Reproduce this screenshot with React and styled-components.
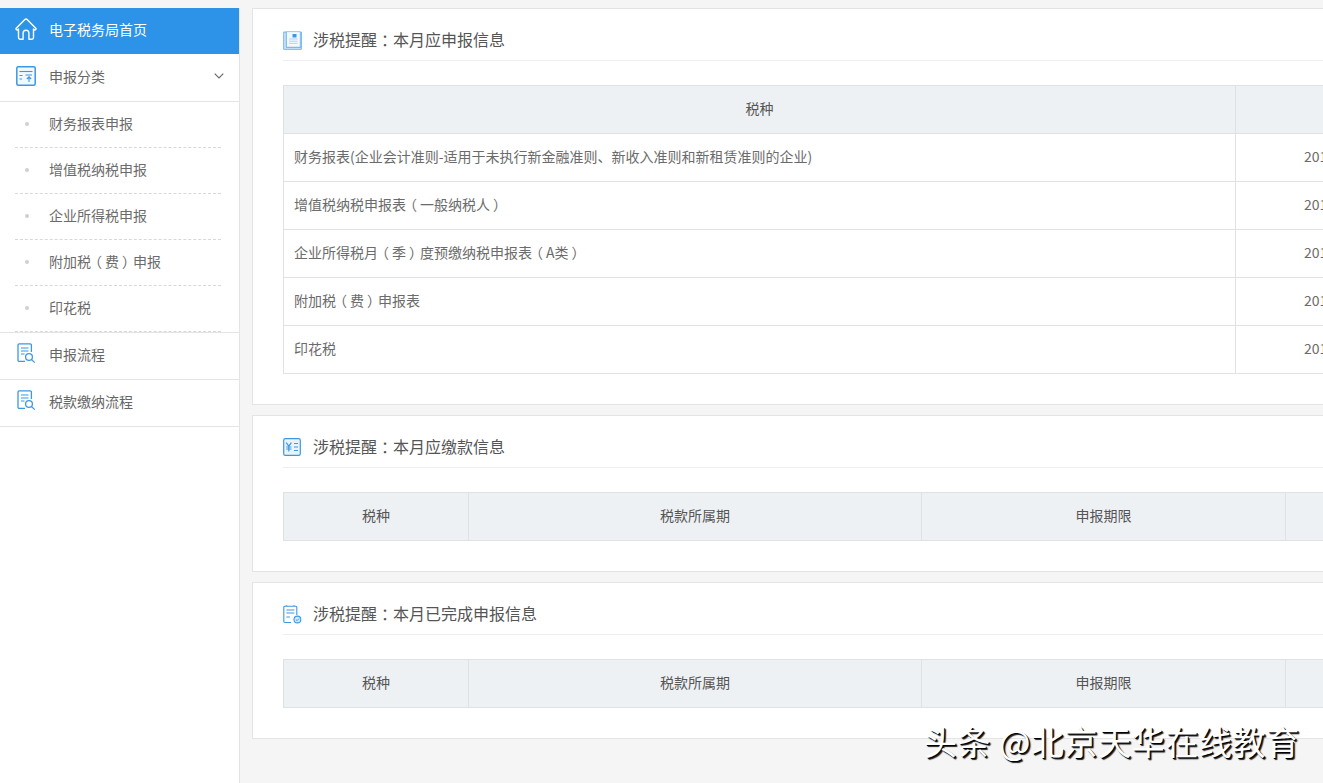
import React from "react";
import styled, { createGlobalStyle } from "styled-components";

const GlobalStyle = createGlobalStyle`
  html, body {
    margin: 0;
    padding: 0;
    height: 100%;
    overflow: hidden;
    background: #f5f5f5;
  }
  #root {
    height: 100%;
  }
`;

const Page = styled.div`
  position: relative;
  display: flex;
  height: 783px;
  box-sizing: border-box;
  padding-top: 8px;
  overflow: hidden;
  font-family: "Noto Sans CJK SC", "Noto Sans", sans-serif;
  color: #666;
`;

const Sidebar = styled.nav`
  flex: 0 0 240px;
  box-sizing: border-box;
  background: #fff;
  border-right: 1px solid #e4e4e4;
`;

const HomeLink = styled.a`
  display: flex;
  align-items: center;
  gap: 12px;
  box-sizing: border-box;
  height: 46px;
  padding: 0 0 5px 15px;
  background: #2d93e8;
  color: #fff;
  font-size: 14px;
`;

const MenuRow = styled.a`
  display: flex;
  align-items: center;
  gap: 13px;
  box-sizing: border-box;
  height: ${(p) => (p.$open ? 48 : 47)}px;
  padding: 0 15px ${(p) => (p.$open ? 3 : 5)}px 16px;
  border-bottom: 1px solid #e4e4e4;
  font-size: 14px;
  color: #666;
`;

const Chevron = styled.svg`
  margin-left: auto;
  width: 10px;
  height: 6px;
`;

const SubList = styled.ul`
  margin: 0;
  padding: 0 18px 0 15px;
  list-style: none;
  border-bottom: 1px solid #e4e4e4;
`;

const SubItem = styled.li`
  position: relative;
  box-sizing: border-box;
  height: 46px;
  padding-left: 34px;
  line-height: 42px;
  font-size: 14px;
  color: #6b6b6b;
  border-bottom: 1px dashed #d8d8d8;

  &::before {
    content: "";
    position: absolute;
    left: 10px;
    top: 20px;
    width: 4px;
    height: 4px;
    background: #d0d0d0;
    border-radius: 50%;
  }
`;

const Main = styled.main`
  flex: 1;
  min-width: 0;
  padding-left: 12px;
  overflow: hidden;
`;

const Card = styled.section`
  box-sizing: border-box;
  width: 1300px;
  margin-bottom: 10px;
  padding: 0 30px 30px;
  background: #fff;
  border: 1px solid #e4e4e4;
`;

const CardHead = styled.h3`
  display: flex;
  align-items: center;
  gap: 11px;
  height: 40px;
  margin: 0 0 24px;
  padding-top: 11px;
  border-bottom: 1px solid #eeeeee;
  font-size: 16px;
  font-weight: 400;
  color: #555;
`;

const CardTitle = styled.span`
  padding-bottom: 2px;
`;

const Table = styled.table`
  width: 1161px;
  table-layout: fixed;
  border-collapse: collapse;
  font-size: 14px;
`;

const Col = styled.col`
  width: ${(p) => p.$w}px;
`;

const Th = styled.th`
  box-sizing: border-box;
  height: 48px;
  padding: 0 10px 4px;
  background: #eef1f4;
  border: 1px solid #dfe2e5;
  font-weight: 400;
  color: #555;
  text-align: center;
`;

const Td = styled.td`
  box-sizing: border-box;
  height: 48px;
  padding: 0 10px 4px;
  border: 1px solid #e2e2e2;
  color: #6b6b6b;
  text-align: ${(p) => (p.$center ? "center" : "left")};
  white-space: nowrap;
`;

// the original font centres full-width punctuation in its box
const Punct = styled.span`
  display: inline-block;
  width: 1em;
  text-align: center;
  font-feature-settings: "palt";
`;

const Watermark = styled.div`
  position: absolute;
  left: 924px;
  top: 719px;
  font-size: 33px;
  line-height: 44px;
  letter-spacing: 0.6px;
  white-space: nowrap;
  color: #fff;
  text-shadow: 1px 1px 0 #000, 2px 2px 1px #222;
`;

const BLUE = "#3c98e2";
const PALE = "#d5e8f9";

const HomeIcon = () => (
  <svg width="22" height="22" viewBox="0 0 22 22" fill="none" stroke="#fff" strokeWidth="1.4" strokeLinejoin="round" strokeLinecap="round">
    <path d="M1 10.5 9.6 1.7a2 2 0 0 1 2.8 0L21 10.5a1.2 1.2 0 0 1-1.6 1.4L18.5 11v8.6a1.6 1.6 0 0 1-1.6 1.6h-3v-6a2.9 2.9 0 0 0-5.8 0v6h-3a1.6 1.6 0 0 1-1.6-1.6V11l-.9.9A1.2 1.2 0 0 1 1 10.5Z" />
  </svg>
);

const UploadIcon = () => (
  <svg width="20" height="20" viewBox="0 0 20 20" fill="none" stroke={BLUE} strokeWidth="1.5">
    <rect x="0.8" y="0.8" width="18.4" height="18.4" rx="1.5" fill="#f1f8fe" />
    <path d="M3.5 5.5h13" strokeWidth="1.1" />
    <path d="M3.5 9.5h3M3.5 13h2.5" strokeWidth="1" />
    <path d="M9.5 9h6.5M13 16v-5M10.8 13l2.2-2.2 2.2 2.2" strokeWidth="1.1" />
  </svg>
);

const SearchDocIcon = () => (
  <svg width="20" height="21" viewBox="-1 0 20 21" fill="none" stroke={BLUE} strokeWidth="1.3">
    <path d="M8 18.4H2.2A1.2 1.2 0 0 1 1 17.2V2A1.2 1.2 0 0 1 2.2.8h11A1.2 1.2 0 0 1 14.4 2v7" />
    <path d="M4 5h7.5M4 8h7.5M4 11h3.5" strokeWidth="1.1" />
    <circle cx="12" cy="14" r="3.4" />
    <path d="m14.6 16.6 3.2 3" />
  </svg>
);

const ReportIcon = () => (
  <svg width="19" height="19" viewBox="0 0 19 19" fill="none" stroke="#6fb3ea" strokeWidth="1">
    <path d="M.7 1h2.5v15.5h14.6V1h.5v17.3H.7Z" fill={PALE} />
    <path d="M3.5 .6h13.8v15.6H3.5z" fill="#f3f8fd" strokeWidth=".7" />
    <path d="M9.5 3h4v3.5h-4z" fill={BLUE} stroke="none" />
    <path d="M6 8h8.5M6 10.2h8.5M6 12.4h8.5" strokeWidth=".9" stroke="#a9d0f2" />
  </svg>
);

const YuanIcon = () => (
  <svg width="19" height="18" viewBox="0 0 19 18" fill="none" stroke={BLUE} strokeWidth="1.2">
    <rect x="0.7" y="0.7" width="16.6" height="16.6" rx="1.6" fill="#e8f3fc" />
    <path d="m3.2 4.6 2.6 3.6 2.6-3.6M5.8 8.2v5.4M3.2 9h5.2M3.2 11h5.2" strokeWidth="1.2" />
    <path d="M11 5.5h4M11 9h4M11 12.5h4" strokeWidth="1.2" />
  </svg>
);

const DoneIcon = () => (
  <svg width="19" height="19" viewBox="0 0 19 19" fill="none" stroke={BLUE} strokeWidth="1.1">
    <path d="M8 17.5H1.8A1 1 0 0 1 .8 16.5V2.2a1 1 0 0 1 1-1h11a1 1 0 0 1 1 1V10" />
    <path d="M3.5 1v-.8M11 1v-.8" />
    <path d="M3.4 5h8M3.4 8h8M3.4 12h3.5" strokeWidth="1" />
    <circle cx="14.4" cy="14.5" r="3.4" fill={PALE} />
    <path d="m12.9 14.6 1.2 1.1 1.9-2.1" strokeWidth=".9" />
  </svg>
);

// wraps the full-width punctuation of a label so it can be centred
const label = (text) =>
  text.split(/([：（）])/).map((part, i) =>
    /^[：（）]$/.test(part) ? <Punct key={i}>{part}</Punct> : part
  );

const subMenus = ["财务报表申报", "增值税纳税申报", "企业所得税申报", "附加税（费）申报", "印花税"];

const monthRows = [
  "财务报表(企业会计准则-适用于未执行新金融准则、新收入准则和新租赁准则的企业)",
  "增值税纳税申报表（一般纳税人）",
  "企业所得税月（季）度预缴纳税申报表（A类）",
  "附加税（费）申报表",
  "印花税",
];

function EmptyTable() {
  return (
    <Table>
      <colgroup>
        <Col $w={185} />
        <Col $w={453} />
        <Col $w={364} />
        <Col $w={159} />
      </colgroup>
      <thead>
        <tr>
          <Th>税种</Th>
          <Th>税款所属期</Th>
          <Th>申报期限</Th>
          <Th />
        </tr>
      </thead>
    </Table>
  );
}

export default function App() {
  return (
    <Page>
      <GlobalStyle />
      <Sidebar>
        <HomeLink>
          <HomeIcon />
          电子税务局首页
        </HomeLink>
        <MenuRow $open>
          <UploadIcon />
          申报分类
          <Chevron viewBox="0 0 10 6" fill="none" stroke="#666" strokeWidth="1.1">
            <path d="m.7.7 4.3 4.3L9.3.7" />
          </Chevron>
        </MenuRow>
        <SubList>
          {subMenus.map((name) => (
            <SubItem key={name}>{label(name)}</SubItem>
          ))}
        </SubList>
        <MenuRow>
          <SearchDocIcon />
          申报流程
        </MenuRow>
        <MenuRow>
          <SearchDocIcon />
          税款缴纳流程
        </MenuRow>
      </Sidebar>
      <Main>
        <Card>
          <CardHead>
            <ReportIcon />
            <CardTitle>{label("涉税提醒：本月应申报信息")}</CardTitle>
          </CardHead>
          <Table>
            <colgroup>
              <Col $w={952} />
              <Col $w={209} />
            </colgroup>
            <thead>
              <tr>
                <Th>税种</Th>
                <Th />
              </tr>
            </thead>
            <tbody>
              {monthRows.map((name) => (
                <tr key={name}>
                  <Td>{label(name)}</Td>
                  <Td $center>2019-12-31</Td>
                </tr>
              ))}
            </tbody>
          </Table>
        </Card>
        <Card>
          <CardHead>
            <YuanIcon />
            <CardTitle>{label("涉税提醒：本月应缴款信息")}</CardTitle>
          </CardHead>
          <EmptyTable />
        </Card>
        <Card>
          <CardHead>
            <DoneIcon />
            <CardTitle>{label("涉税提醒：本月已完成申报信息")}</CardTitle>
          </CardHead>
          <EmptyTable />
        </Card>
      </Main>
      <Watermark>头条 @北京天华在线教育</Watermark>
    </Page>
  );
}
